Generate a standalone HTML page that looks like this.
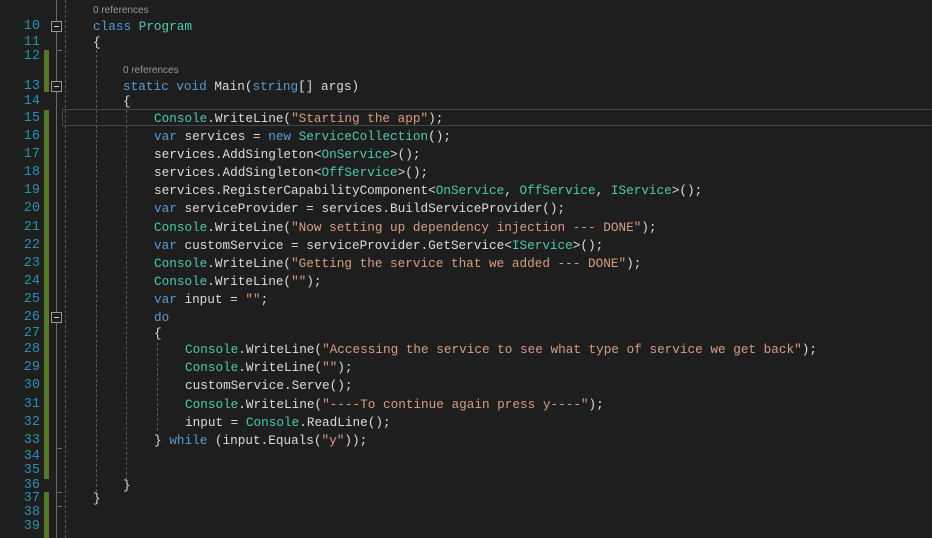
<!DOCTYPE html>
<html><head><style>
body{margin:0;width:932px;height:538px;background:#1e1e1e;overflow:hidden;position:relative;font-family:"Liberation Mono",monospace;}
.ln{position:absolute;left:0;width:40px;text-align:right;color:#2b91af;font-size:13.5px;line-height:15px}
.c{position:absolute;color:#dcdcdc;font-size:12.7px;line-height:15px;white-space:pre}
.k{color:#569cd6}.t{color:#4ec9b0}.s{color:#d69d85}
.ref{position:absolute;color:#999;font-family:"Liberation Sans",sans-serif;font-size:10px;line-height:12px}
.bar{position:absolute;left:44px;width:5px;background:#56782b}
.fold{position:absolute;left:51px;width:9px;height:9px;border:1px solid #999;background:#1e1e1e}
.fold:after{content:"";position:absolute;left:2px;top:4px;width:5px;height:1px;background:#ccc}
.g{position:absolute;width:0;border-left:1px dashed #5a5a5a}
</style></head><body>
<div style="position:absolute;left:56px;top:0;width:1px;height:538px;background:#6a6a6a"></div>
<div class="bar" style="top:50px;height:42px"></div>
<div class="bar" style="top:110px;height:369px"></div>
<div class="bar" style="top:492px;height:46px"></div>
<div class="fold" style="top:21px"></div>
<div class="fold" style="top:81px"></div>
<div class="fold" style="top:312px"></div>
<div style="position:absolute;left:57px;top:50px;width:5px;height:1px;background:#6a6a6a"></div>
<div style="position:absolute;left:57px;top:448px;width:5px;height:1px;background:#6a6a6a"></div>
<div style="position:absolute;left:57px;top:492px;width:5px;height:1px;background:#6a6a6a"></div>
<div style="position:absolute;left:57px;top:506px;width:5px;height:1px;background:#6a6a6a"></div>
<div class="g" style="left:65px;top:0;height:538px"></div>
<div class="g" style="left:96px;top:50px;height:442px"></div>
<div class="g" style="left:126px;top:110px;height:370px"></div>
<div class="g" style="left:157px;top:343px;height:88px"></div>
<div style="position:absolute;left:62px;top:109px;width:880px;height:17px;border:1px solid #464646;box-sizing:border-box"></div>
<div class="ref" style="left:93px;top:5px">0 references</div>
<div class="ref" style="left:123px;top:65px">0 references</div>

<div class="ln" style="top:19px">10</div><div class="c" style="left:93px;top:19px"><span class="k">class</span> <span class="t">Program</span></div>
<div class="ln" style="top:35px">11</div><div class="c" style="left:93px;top:35px">{</div>
<div class="ln" style="top:49px">12</div>
<div class="ln" style="top:79px">13</div><div class="c" style="left:123px;top:79px"><span class="k">static</span> <span class="k">void</span> Main(<span class="k">string</span>[] args)</div>
<div class="ln" style="top:94px">14</div><div class="c" style="left:123px;top:94px">{</div>
<div class="ln" style="top:111px">15</div><div class="c" style="left:154px;top:111px"><span class="t">Console</span>.WriteLine(<span class="s">"Starting the app"</span>);</div>
<div class="ln" style="top:129px">16</div><div class="c" style="left:154px;top:129px"><span class="k">var</span> services = <span class="k">new</span> <span class="t">ServiceCollection</span>();</div>
<div class="ln" style="top:147px">17</div><div class="c" style="left:154px;top:147px">services.AddSingleton&lt;<span class="t">OnService</span>&gt;();</div>
<div class="ln" style="top:165px">18</div><div class="c" style="left:154px;top:165px">services.AddSingleton&lt;<span class="t">OffService</span>&gt;();</div>
<div class="ln" style="top:183px">19</div><div class="c" style="left:154px;top:183px">services.RegisterCapabilityComponent&lt;<span class="t">OnService</span>, <span class="t">OffService</span>, <span class="t">IService</span>&gt;();</div>
<div class="ln" style="top:201px">20</div><div class="c" style="left:154px;top:201px"><span class="k">var</span> serviceProvider = services.BuildServiceProvider();</div>
<div class="ln" style="top:220px">21</div><div class="c" style="left:154px;top:220px"><span class="t">Console</span>.WriteLine(<span class="s">"Now setting up dependency injection --- DONE"</span>);</div>
<div class="ln" style="top:238px">22</div><div class="c" style="left:154px;top:238px"><span class="k">var</span> customService = serviceProvider.GetService&lt;<span class="t">IService</span>&gt;();</div>
<div class="ln" style="top:256px">23</div><div class="c" style="left:154px;top:256px"><span class="t">Console</span>.WriteLine(<span class="s">"Getting the service that we added --- DONE"</span>);</div>
<div class="ln" style="top:274px">24</div><div class="c" style="left:154px;top:274px"><span class="t">Console</span>.WriteLine(<span class="s">""</span>);</div>
<div class="ln" style="top:292px">25</div><div class="c" style="left:154px;top:292px"><span class="k">var</span> input = <span class="s">""</span>;</div>
<div class="ln" style="top:310px">26</div><div class="c" style="left:154px;top:310px"><span class="k">do</span></div>
<div class="ln" style="top:326px">27</div><div class="c" style="left:154px;top:326px">{</div>
<div class="ln" style="top:342px">28</div><div class="c" style="left:185px;top:342px"><span class="t">Console</span>.WriteLine(<span class="s">"Accessing the service to see what type of service we get back"</span>);</div>
<div class="ln" style="top:360px">29</div><div class="c" style="left:185px;top:360px"><span class="t">Console</span>.WriteLine(<span class="s">""</span>);</div>
<div class="ln" style="top:378px">30</div><div class="c" style="left:185px;top:378px">customService.Serve();</div>
<div class="ln" style="top:397px">31</div><div class="c" style="left:185px;top:397px"><span class="t">Console</span>.WriteLine(<span class="s">"----To continue again press y----"</span>);</div>
<div class="ln" style="top:415px">32</div><div class="c" style="left:185px;top:415px">input = <span class="t">Console</span>.ReadLine();</div>
<div class="ln" style="top:433px">33</div><div class="c" style="left:154px;top:433px">} <span class="k">while</span> (input.Equals(<span class="s">"y"</span>));</div>
<div class="ln" style="top:449px">34</div>
<div class="ln" style="top:463px">35</div>
<div class="ln" style="top:478px">36</div><div class="c" style="left:123px;top:478px">}</div>
<div class="ln" style="top:491px">37</div><div class="c" style="left:93px;top:491px">}</div>
<div class="ln" style="top:505px">38</div>
<div class="ln" style="top:519px">39</div>
</body></html>
